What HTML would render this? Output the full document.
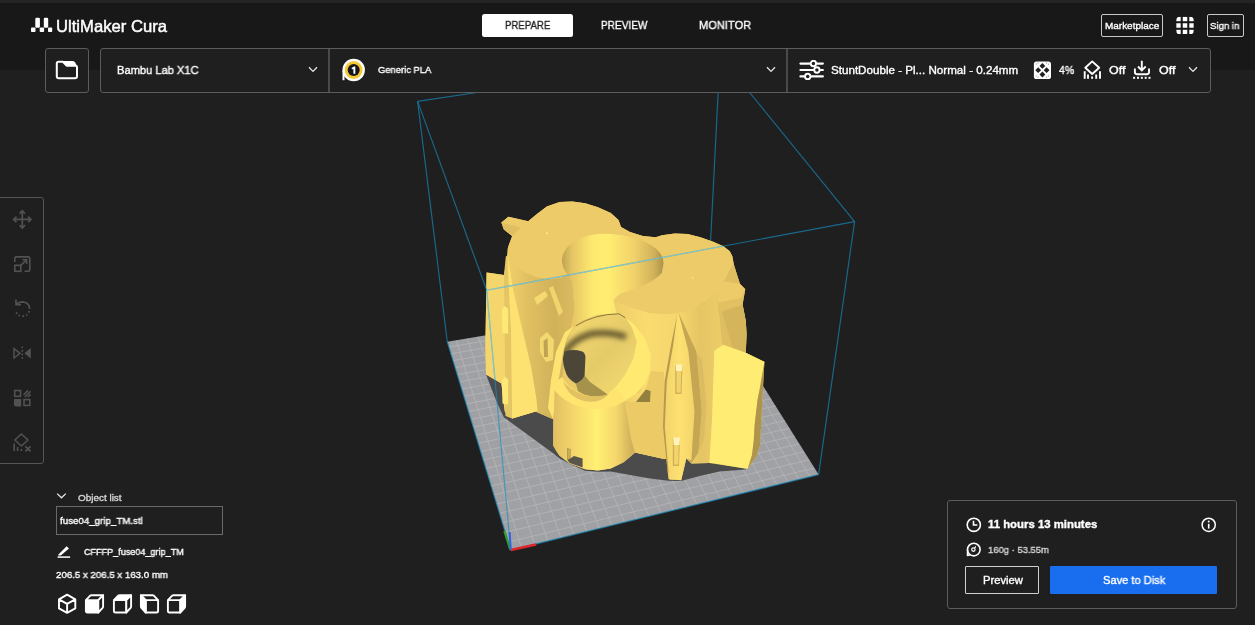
<!DOCTYPE html>
<html>
<head>
<meta charset="utf-8">
<title>UltiMaker Cura</title>
<style>
*{box-sizing:border-box;margin:0;padding:0}
html,body{width:1255px;height:625px;overflow:hidden;background:#1f1f1f;font-family:"Liberation Sans",sans-serif;color:#fff}
#app{position:relative;width:1255px;height:625px;overflow:hidden;background:#1f1f1f}
#hdr{position:absolute;left:0;top:0;width:1255px;height:70px;background:#181818}
#hdr:before{content:"";position:absolute;left:0;top:0;width:100%;height:3px;background:#242424}
#scene{position:absolute;left:0;top:0;width:1255px;height:625px}
.t{position:absolute;white-space:nowrap;line-height:1;color:#fff;-webkit-text-stroke:0.35px currentColor;will-change:transform}
.box{position:absolute;border:1px solid #5c5c5c;border-radius:3px;background:#1f1f1f}
.ico{position:absolute}
</style>
</head>
<body>
<div id="app">
<div id="hdr"></div>

<!-- 3D SCENE -->
<svg id="scene" width="1255" height="625" viewBox="0 0 1255 625">
<defs>
<clipPath id="plateclip"><polygon points="447.3,341.8 510.7,550.1 818.6,474.6 707.7,297.5"/></clipPath>
</defs>
<line x1="417.6" y1="101.4" x2="720.0" y2="56.0" stroke="#168dc2" stroke-width="1.15" stroke-opacity="0.67"/>
<line x1="720.0" y1="56.0" x2="854.6" y2="221.6" stroke="#168dc2" stroke-width="1.15" stroke-opacity="0.67"/>
<line x1="720.0" y1="56.0" x2="707.7" y2="297.5" stroke="#168dc2" stroke-width="1.15" stroke-opacity="0.67"/>
<line x1="417.6" y1="101.4" x2="447.3" y2="341.8" stroke="#168dc2" stroke-width="1.15" stroke-opacity="0.67"/>
<line x1="854.6" y1="221.6" x2="818.6" y2="474.6" stroke="#168dc2" stroke-width="1.15" stroke-opacity="0.67"/>
<polygon points="447.3,341.8 510.7,550.1 818.6,474.6 707.7,297.5" fill="#a0a1a5"/>
<g clip-path="url(#plateclip)" stroke="#b4b4b4" stroke-width="0.9" fill="none">
<line x1="521.4" y1="547.5" x2="456.2" y2="340.3"/>
<line x1="508.3" y1="542.1" x2="814.4" y2="468.0"/>
<line x1="534.7" y1="544.2" x2="467.2" y2="338.4"/>
<line x1="505.3" y1="532.3" x2="809.3" y2="459.8"/>
<line x1="547.9" y1="541.0" x2="478.2" y2="336.5"/>
<line x1="502.4" y1="522.7" x2="804.3" y2="451.7"/>
<line x1="560.9" y1="537.8" x2="489.1" y2="334.7"/>
<line x1="499.5" y1="513.3" x2="799.3" y2="443.8"/>
<line x1="573.8" y1="534.6" x2="499.9" y2="332.9"/>
<line x1="496.7" y1="504.0" x2="794.4" y2="436.0"/>
<line x1="586.7" y1="531.5" x2="510.6" y2="331.0"/>
<line x1="493.9" y1="494.8" x2="789.6" y2="428.3"/>
<line x1="599.4" y1="528.4" x2="521.2" y2="329.2"/>
<line x1="491.1" y1="485.9" x2="784.9" y2="420.7"/>
<line x1="611.9" y1="525.3" x2="531.8" y2="327.4"/>
<line x1="488.5" y1="477.0" x2="780.2" y2="413.3"/>
<line x1="624.4" y1="522.2" x2="542.3" y2="325.6"/>
<line x1="485.8" y1="468.4" x2="775.6" y2="406.0"/>
<line x1="636.8" y1="519.2" x2="552.7" y2="323.9"/>
<line x1="483.2" y1="459.8" x2="771.1" y2="398.7"/>
<line x1="649.0" y1="516.2" x2="563.0" y2="322.1"/>
<line x1="480.7" y1="451.5" x2="766.6" y2="391.6"/>
<line x1="661.2" y1="513.2" x2="573.3" y2="320.4"/>
<line x1="478.2" y1="443.2" x2="762.2" y2="384.6"/>
<line x1="673.2" y1="510.2" x2="583.4" y2="318.6"/>
<line x1="475.7" y1="435.1" x2="757.9" y2="377.7"/>
<line x1="685.2" y1="507.3" x2="593.6" y2="316.9"/>
<line x1="473.3" y1="427.1" x2="753.7" y2="370.9"/>
<line x1="697.0" y1="504.4" x2="603.6" y2="315.2"/>
<line x1="470.9" y1="419.3" x2="749.5" y2="364.2"/>
<line x1="708.7" y1="501.5" x2="613.6" y2="313.5"/>
<line x1="468.5" y1="411.5" x2="745.3" y2="357.6"/>
<line x1="720.4" y1="498.7" x2="623.5" y2="311.8"/>
<line x1="466.2" y1="403.9" x2="741.2" y2="351.1"/>
<line x1="731.9" y1="495.9" x2="633.3" y2="310.2"/>
<line x1="463.9" y1="396.4" x2="737.2" y2="344.6"/>
<line x1="743.3" y1="493.1" x2="643.1" y2="308.5"/>
<line x1="461.7" y1="389.1" x2="733.3" y2="338.3"/>
<line x1="754.7" y1="490.3" x2="652.8" y2="306.8"/>
<line x1="459.5" y1="381.8" x2="729.3" y2="332.1"/>
<line x1="765.9" y1="487.5" x2="662.4" y2="305.2"/>
<line x1="457.3" y1="374.6" x2="725.5" y2="325.9"/>
<line x1="777.1" y1="484.8" x2="672.0" y2="303.6"/>
<line x1="455.2" y1="367.6" x2="721.7" y2="319.8"/>
<line x1="788.1" y1="482.1" x2="681.5" y2="302.0"/>
<line x1="453.0" y1="360.7" x2="717.9" y2="313.8"/>
<line x1="799.1" y1="479.4" x2="690.9" y2="300.4"/>
<line x1="451.0" y1="353.8" x2="714.2" y2="307.9"/>
<line x1="810.0" y1="476.7" x2="700.3" y2="298.8"/>
<line x1="448.9" y1="347.1" x2="710.6" y2="302.1"/>
</g>
<polyline points="447.3,341.8 510.7,550.1 818.6,474.6" fill="none" stroke="#168dc2" stroke-opacity="0.67" stroke-width="1.3"/>
<defs>
<linearGradient id="gBowl" gradientUnits="userSpaceOnUse" x1="562" y1="0" x2="664" y2="0">
 <stop offset="0" stop-color="#bfa353"/><stop offset="0.1" stop-color="#e5c564"/><stop offset="0.3" stop-color="#ffe970"/><stop offset="0.45" stop-color="#ffed71"/><stop offset="0.7" stop-color="#f2d26a"/><stop offset="0.9" stop-color="#d1b25a"/><stop offset="1" stop-color="#aa924b"/>
</linearGradient>
<linearGradient id="gCyl" gradientUnits="userSpaceOnUse" x1="554" y1="0" x2="632" y2="0">
 <stop offset="0" stop-color="#e2c062"/><stop offset="0.25" stop-color="#f5d66b"/><stop offset="0.55" stop-color="#fff072"/><stop offset="0.8" stop-color="#f5d66c"/><stop offset="1" stop-color="#cfb15a"/>
</linearGradient>
<linearGradient id="gLobeL" gradientUnits="userSpaceOnUse" x1="507" y1="0" x2="575" y2="0">
 <stop offset="0" stop-color="#f0d069"/><stop offset="0.3" stop-color="#e1c062"/><stop offset="0.7" stop-color="#d1b25a"/><stop offset="1" stop-color="#dcbb60"/>
</linearGradient>
<linearGradient id="gLobeR" gradientUnits="userSpaceOnUse" x1="614" y1="0" x2="722" y2="0">
 <stop offset="0" stop-color="#edce68"/><stop offset="0.3" stop-color="#fadb70"/><stop offset="0.6" stop-color="#f5d66d"/><stop offset="0.8" stop-color="#e5c564"/><stop offset="1" stop-color="#edcd67"/>
</linearGradient>
<linearGradient id="gCup" gradientUnits="userSpaceOnUse" x1="596" y1="316" x2="606" y2="398">
 <stop offset="0" stop-color="#f9dc71"/><stop offset="0.14" stop-color="#e5c868"/><stop offset="0.24" stop-color="#85763c"/><stop offset="0.36" stop-color="#ccb25e"/><stop offset="0.6" stop-color="#e5ca69"/><stop offset="1" stop-color="#f2d76f"/>
</linearGradient>
<linearGradient id="gCup2" gradientUnits="userSpaceOnUse" x1="575" y1="330" x2="630" y2="385">
 <stop offset="0" stop-color="#efd46e"/><stop offset="0.5" stop-color="#e5ca69"/><stop offset="1" stop-color="#f3d970"/>
</linearGradient>
<linearGradient id="gFin" gradientUnits="userSpaceOnUse" x1="664" y1="0" x2="696" y2="0">
 <stop offset="0" stop-color="#f2d36b"/><stop offset="0.5" stop-color="#fde071"/><stop offset="1" stop-color="#f1d26a"/>
</linearGradient>
</defs>
<polygon points="486.0,374.4 492.0,390.0 498.0,405.0 503.8,417.3 514.4,425.0 528.8,435.5 543.2,446.0 553.8,453.8 559.6,458.6 572.4,465.0 585.0,470.7 598.0,471.8 610.8,471.4 630.0,475.0 650.0,478.5 668.4,480.8 681.2,481.0 700.0,476.0 719.6,471.5 745.2,469.4 750.0,465.0 740.0,440.0 560.0,400.0" fill="#4b4b4c" />
<polygon points="501.4,222.5 508.4,216.8 528.2,221.2 536.6,214.2 546.8,206.5 559.6,202.0 572.4,201.4 585.2,203.3 598.0,207.2 610.8,212.9 618.5,220.0 621.0,227.0 630.0,232.0 642.8,236.0 655.6,237.2 662.0,235.3 674.8,233.4 687.6,234.0 700.4,237.2 713.2,241.7 723.4,246.2 729.8,251.3 732.4,256.4 733.7,264.1 736.5,273.0 740.0,284.0 745.2,289.2 742.6,304.6 745.8,321.2 746.5,334.0 745.8,352.7 764.4,361.6 762.5,396.2 761.4,420.0 760.0,445.6 756.7,455.8 747.8,468.6 745.2,468.6 709.4,462.9 691.4,463.5 686.3,458.4 681.2,480.2 669.7,479.5 668.4,478.9 666.5,459.0 662.0,458.4 635.1,452.6 630.0,457.1 623.6,462.2 610.8,468.6 598.0,470.6 585.2,469.3 569.8,463.5 559.6,455.8 553.2,445.6 553.2,419.2 535.3,411.6 512.2,418.6 504.6,411.6 501.4,383.4 486.0,374.4 485.4,345.0 486.6,272.6 504.0,275.0 505.8,256.4 507.8,255.2 508.4,246.2 512.2,236.0 503.9,229.6" fill="#ebc966" />
<clipPath id="silclip"><polygon points="501.4,222.5 508.4,216.8 528.2,221.2 536.6,214.2 546.8,206.5 559.6,202.0 572.4,201.4 585.2,203.3 598.0,207.2 610.8,212.9 618.5,220.0 621.0,227.0 630.0,232.0 642.8,236.0 655.6,237.2 662.0,235.3 674.8,233.4 687.6,234.0 700.4,237.2 713.2,241.7 723.4,246.2 729.8,251.3 732.4,256.4 733.7,264.1 736.5,273.0 740.0,284.0 745.2,289.2 742.6,304.6 745.8,321.2 746.5,334.0 745.8,352.7 764.4,361.6 762.5,396.2 761.4,420.0 760.0,445.6 756.7,455.8 747.8,468.6 745.2,468.6 709.4,462.9 691.4,463.5 686.3,458.4 681.2,480.2 669.7,479.5 668.4,478.9 666.5,459.0 662.0,458.4 635.1,452.6 630.0,457.1 623.6,462.2 610.8,468.6 598.0,470.6 585.2,469.3 569.8,463.5 559.6,455.8 553.2,445.6 553.2,419.2 535.3,411.6 512.2,418.6 504.6,411.6 501.4,383.4 486.0,374.4 485.4,345.0 486.6,272.6 504.0,275.0 505.8,256.4 507.8,255.2 508.4,246.2 512.2,236.0 503.9,229.6"/></clipPath>
<polygon points="733.7,264.1 736.5,273.0 740.0,284.0 745.2,289.2 742.6,304.6 745.8,321.2 746.5,334.0 745.8,352.7 722.0,345.0 717.0,292.0 724.0,281.0 729.8,270.0" fill="#dfbe61" />
<polygon points="722.0,312.0 742.6,305.0 745.8,321.2 746.5,334.0 745.8,352.7 733.0,349.0" fill="#d5b55b" />
<polygon points="507.5,249.2 512.0,262.0 522.2,271.0 537.6,277.4 551.7,279.3 561.9,277.4 567.0,274.2 572.2,281.2 574.7,310.0 570.0,332.0 565.6,351.0 560.0,400.0 553.2,419.2 535.3,411.6 512.2,418.6 505.0,411.0 504.5,300.0" fill="url(#gLobeL)" />
<polygon points="534.0,298.0 545.0,291.0 548.0,296.0 537.0,305.0" fill="#f5d86f" />
<polygon points="549.0,288.0 553.0,286.0 563.0,312.0 559.0,316.0" fill="#f2d46d" />
<polygon points="540.0,338.0 547.0,332.0 554.0,340.0 553.0,360.0 546.0,362.0 540.0,352.0" fill="#f3d870" />
<polygon points="543.5,341.0 547.5,338.0 548.0,357.0 544.0,357.0" fill="#c0a352" />
<polygon points="553.0,419.2 556.0,396.0 560.0,372.0 563.0,352.0 567.0,338.0 574.0,326.0 565.0,332.0 556.0,352.0 551.0,380.0 548.0,408.0" fill="#fde371" />
<polygon points="613.6,300.3 630.0,307.0 649.5,313.0 668.0,314.0 685.0,311.6 701.7,303.3 717.0,292.0 722.0,345.0 714.5,352.7 712.0,420.0 709.4,462.9 691.4,463.5 686.3,458.4 666.5,459.0 662.0,458.4 635.1,452.6 631.4,440.0 624.7,401.0 640.0,392.0 650.0,372.0 651.0,355.0 645.0,338.0 634.0,324.0 625.4,317.8 616.0,313.0" fill="url(#gLobeR)" />
<polygon points="624.7,401.0 635.2,402.0 645.8,389.6 651.0,371.0 664.0,372.0 664.0,420.0 666.5,459.0 662.0,458.4 635.1,452.6 631.4,440.0" fill="#eccb67" />
<polygon points="636.0,402.0 645.8,389.6 650.6,391.0 650.0,402.0" fill="#93803f" />
<path d="M561.8,261 C561.5,246 580,233.6 604,233.6 C634,233.6 664.5,246 663.7,263.4 L662,273 Q655,280 646,284 L634,289.5 L620,294 L613.6,300.3 L616.8,313.4 L597.6,314.7 L582.2,320.5 L576,324 L574.7,310 L572.2,281.2 L567,274.2 Q562.5,268 561.8,261Z" fill="url(#gBowl)" />
<polygon points="512.2,236.0 503.9,229.6 501.4,222.5 508.4,216.8 528.2,221.2 536.6,214.2 546.8,206.5 559.6,202.0 572.4,201.4 585.2,203.3 598.0,207.2 610.8,212.9 618.5,220.0 621.0,227.0 630.0,232.0 642.8,236.0 655.6,237.2 662.0,235.3 674.8,233.4 687.6,234.0 700.4,237.2 713.2,241.7 723.4,246.2 729.8,251.3 732.4,256.4 733.7,264.1 729.8,270.0 724.0,281.0 740.0,284.0 745.2,289.2 741.4,298.0 718.3,303.0 717.0,292.0 701.7,303.3 685.0,311.6 668.0,314.0 649.5,313.0 630.0,307.0 613.6,300.3 620.0,294.0 634.0,289.5 646.0,284.0 655.0,280.0 662.0,273.0 663.7,263.4 663.0,258.3 660.7,253.6 656.8,249.3 651.7,245.4 645.4,242.0 638.2,239.1 630.3,236.7 621.8,235.0 613.0,234.0 604.0,233.6 597.0,234.0 590.4,235.0 584.2,236.7 578.7,238.9 573.8,241.7 569.6,244.9 566.2,248.5 563.8,252.4 562.3,256.6 561.8,261.0 562.5,268.0 567.0,274.2 561.9,277.4 551.7,279.3 537.6,277.4 522.2,271.0 512.0,262.0 507.5,249.2 508.4,246.2" fill="#edcb68" />
<polygon points="501.4,222.5 521.0,227.5 512.2,236.0 503.9,229.6" fill="#dfbf61" />
<polygon points="717.0,292.0 718.3,311.0 741.4,304.6 745.2,289.2 741.4,298.0 718.3,303.0" fill="#e2c163" />
<polygon points="486.6,272.6 504.0,275.0 505.0,300.0 505.6,416.0 501.4,383.4 486.0,374.4 485.4,345.0" fill="#f5d66c" />
<polygon points="504.0,275.0 507.5,255.6 509.0,290.0 511.0,330.0 512.2,418.6 505.6,416.0" fill="#e5c664" />
<polygon points="507.5,255.6 513.3,290.6 522.2,329.0 531.2,367.4 536.3,398.0 537.6,411.0 512.2,418.6 511.0,330.0 509.0,290.0" fill="#fee271" />
<polygon points="501.8,310.0 505.0,306.0 508.2,309.0 508.2,334.0 502.5,333.0" fill="#ffe976" />
<polygon points="501.8,380.5 505.0,376.4 508.2,379.5 508.2,404.5 502.5,403.5" fill="#ffe976" />
<polygon points="625.4,317.8 634.0,324.0 645.0,338.0 651.0,355.0 650.0,372.0 645.0,384.0 636.0,394.0 624.7,401.0 612.0,398.0 600.0,398.0 616.0,386.6 625.4,373.8 633.4,357.8 636.6,341.8 632.0,328.0" fill="#ffe971" />
<clipPath id="cupclip"><polygon points="566.2,341.8 575.8,325.8 595.0,316.2 619.0,313.8 625.4,317.8 632.0,328.0 636.6,341.8 633.4,357.8 625.4,373.8 615.8,386.6 607.8,394.6 599.8,397.8 588.0,397.0 576.0,390.0 567.0,376.0 563.5,360.0 564.0,350.0"/></clipPath>
<filter id="blur3" x="-20%" y="-50%" width="140%" height="200%"><feGaussianBlur stdDeviation="2.6"/></filter>
<polygon points="566.2,341.8 575.8,325.8 595.0,316.2 619.0,313.8 625.4,317.8 632.0,328.0 636.6,341.8 633.4,357.8 625.4,373.8 615.8,386.6 607.8,394.6 599.8,397.8 588.0,397.0 576.0,390.0 567.0,376.0 563.5,360.0 564.0,350.0" fill="url(#gCup2)" />
<g clip-path="url(#cupclip)"><path d="M562,357 Q572,338 593,333.5 Q610,331.5 626,337" fill="none" stroke="#6a5d31" stroke-width="6.5" filter="url(#blur3)"/></g>
<path d="M575.8,325.8 Q595,314 619,313.8 L625.4,317.8" fill="none" stroke="#7d6e38" stroke-width="0.9"/>
<polygon points="575.8,383.4 584.6,375.4 590.0,382.0 607.8,394.6 599.8,397.8 588.0,397.0 578.0,391.0" fill="#a6934b" />
<path d="M564.6,351.4 Q573,348.6 582.2,351.4 Q585.6,353 585.4,357.8 L584.6,375.4 Q582,381 575.8,383.4 Q569,380 566.2,373.8 Q562.6,364 563,357.8 Z" fill="#4b4638" />
<path d="M554.5,390 L553.2,445.6 Q556,452 559.6,455.8 L569.8,463.5 L585.2,469.3 L598,470.6 L610.8,468.6 L623.6,462.2 L630,457.1 L635.1,452.6 L631.4,440 L624.7,401 Q610,410 590,408 Q566,404 554.5,390Z" fill="url(#gCyl)" />
<path d="M554.5,390 Q555,382 562,377 Q566,385 576,391 Q590,399 607,396 L616,388 Q622,393 624.7,401 Q610,411 590,409 Q566,405 554.5,390Z" fill="#ffe56f" />
<path d="M563,381 Q570,390 584,395 Q598,398 609,394 Q600,404 584,401 Q568,397 563,381Z" fill="#e2c163" />
<polygon points="567.3,448.2 571.0,449.5 571.0,458.0 574.0,456.0 582.6,458.5 582.6,467.5 569.8,463.0 567.3,460.0" fill="#59554a" />
<polygon points="567.3,448.2 571.0,449.5 571.0,458.0 567.3,460.0" fill="#caac57" />
<polygon points="677.8,312.8 672.0,345.0 665.6,381.2 664.0,426.8 668.6,472.4 669.7,479.5 676.2,479.8 681.2,480.2 686.3,458.4 691.4,460.3 694.5,411.6 688.4,350.8" fill="url(#gFin)" />
<polygon points="677.3,314.0 671.0,345.0 664.6,381.2 663.0,426.8 667.6,472.4 668.6,472.4 664.8,426.8 666.8,381.2 673.2,345.0" fill="#b79a4f" />
<polygon points="678.6,312.8 688.4,350.8 694.5,411.6 691.4,460.3 686.3,458.4 691.4,463.5 698.5,452.0 701.8,411.0 696.5,352.0" fill="#c5a653" />
<polygon points="696.5,352.0 701.8,411.0 698.5,452.0 704.0,440.0 706.5,405.0 702.0,360.0" fill="#dbbc60" />
<polygon points="675.2,365.0 682.5,365.0 681.5,394.0 675.2,394.0" fill="#d2b056" />
<polygon points="676.6,371.0 681.2,371.0 680.6,392.5 676.6,392.5" fill="#f2d46c" />
<polygon points="675.6,364.5 682.5,364.5 682.0,371.0 676.0,371.0" fill="#fff3b8" />
<polygon points="672.8,438.0 680.0,438.0 679.0,466.0 672.8,466.0" fill="#d2b056" />
<polygon points="674.2,445.0 678.8,445.0 678.2,464.5 674.2,464.5" fill="#f2d46c" />
<polygon points="673.2,437.5 680.0,437.5 679.6,445.0 673.6,445.0" fill="#fff3b8" />
<polygon points="714.3,350.8 723.4,344.7 745.8,352.7 764.4,362.0 759.5,390.0 757.5,400.0 754.6,425.0 753.8,440.0 752.0,455.0 747.8,468.6 745.2,468.6 714.3,463.3 709.4,462.9 712.0,420.0" fill="#ffec73" />
<polygon points="764.4,362.0 762.5,396.2 761.4,420.0 760.0,445.6 756.7,455.8 747.8,468.6 752.0,455.0 753.8,440.0 754.6,425.0 757.5,400.0 759.5,390.0" fill="#af944b" />
<polygon points="545.6,232.6 548.4,232.8 547.0,234.6" fill="#fff0a8" />
<polygon points="691.5,277.5 693.5,277.8 692.5,279.3" fill="#fff0a8" />
<line x1="417.6" y1="101.4" x2="486.7" y2="290.3" stroke="#168dc2" stroke-width="1.15" stroke-opacity="0.67"/>
<line x1="486.7" y1="290.3" x2="854.6" y2="221.6" stroke="#168dc2" stroke-width="1.15" stroke-opacity="0.67"/>
<line x1="486.7" y1="290.3" x2="510.7" y2="550.1" stroke="#168dc2" stroke-width="1.15" stroke-opacity="0.67"/>
<g clip-path="url(#silclip)" stroke="#9fdde0" stroke-width="1.2" stroke-opacity="0.55"><line x1="486.7" y1="290.3" x2="854.6" y2="221.6"/><line x1="486.7" y1="290.3" x2="510.7" y2="550.1"/></g>
<line x1="510.7" y1="550.1" x2="536.0" y2="544.4" stroke="#e0262b" stroke-width="2.6" />
<line x1="504.3" y1="531.0" x2="510.2" y2="549.5" stroke="#2aa02a" stroke-width="2.2" />
<line x1="509.6" y1="532.0" x2="510.7" y2="549.5" stroke="#2f62e6" stroke-width="2.0" />
</svg>

<!-- HEADER -->
<svg class="ico" style="left:31px;top:17px" width="22" height="16" viewBox="0 0 22 16"><g fill="#fff"><rect x="0" y="10.6" width="4.5" height="4.4" rx="0.8"/><rect x="4.3" y="0.8" width="4.6" height="10" rx="1.2"/><rect x="8.7" y="10.6" width="4.4" height="4.4" rx="0.8"/><rect x="12.8" y="0.8" width="4.4" height="10" rx="1.2"/><rect x="17" y="10.6" width="4.2" height="4.4" rx="0.8"/></g></svg>
<span class="t" id="t1" style="left:55.6px;top:17.73px;font-size:16.5px;font-weight:normal;color:#fff;transform:scaleX(1.0088);transform-origin:0 0;-webkit-text-stroke:0.45px #fff">UltiMaker Cura</span>

<div style="position:absolute;left:481.6px;top:14px;width:91.4px;height:22.8px;background:#fff;border-radius:2.5px"></div>
<span class="t" id="t2" style="left:504.7px;top:19.75px;font-size:11.4px;font-weight:normal;color:#1f1f1f;transform:scaleX(0.8452);transform-origin:0 0">PREPARE</span>
<span class="t" id="t3" style="left:601.4px;top:19.75px;font-size:11.4px;font-weight:normal;color:#fff;transform:scaleX(0.8849);transform-origin:0 0">PREVIEW</span>
<span class="t" id="t4" style="left:698.8px;top:19.75px;font-size:11.4px;font-weight:normal;color:#fff;transform:scaleX(0.9743);transform-origin:0 0">MONITOR</span>

<div class="box" style="left:1101px;top:14px;width:62px;height:23px;border-color:#c8c8c8;background:transparent;border-radius:2px"></div>
<span class="t" id="t5" style="left:1105px;top:20.70px;font-size:9.8px;font-weight:normal;color:#fff;transform:scaleX(1.0155);transform-origin:0 0">Marketplace</span>
<svg class="ico" style="left:1176px;top:16px" width="18" height="18" viewBox="0 0 18 18"><defs><clipPath id="gc"><rect x="0.2" y="0.7" width="17.6" height="17.6" rx="3.6"/></clipPath></defs><g clip-path="url(#gc)"><rect x="0.20" y="0.70" width="4.5" height="4.5" fill="#fff"/><rect x="6.75" y="0.70" width="4.5" height="4.5" fill="#fff"/><rect x="13.30" y="0.70" width="4.5" height="4.5" fill="#fff"/><rect x="0.20" y="7.25" width="4.5" height="4.5" fill="#fff"/><rect x="6.75" y="7.25" width="4.5" height="4.5" fill="#fff"/><rect x="13.30" y="7.25" width="4.5" height="4.5" fill="#fff"/><rect x="0.20" y="13.80" width="4.5" height="4.5" fill="#fff"/><rect x="6.75" y="13.80" width="4.5" height="4.5" fill="#fff"/><rect x="13.30" y="13.80" width="4.5" height="4.5" fill="#fff"/></g></svg>
<div class="box" style="left:1207px;top:14px;width:37px;height:23px;border-color:#c8c8c8;background:transparent;border-radius:2px"></div>
<span class="t" id="t6" style="left:1210.4px;top:20.70px;font-size:9.8px;font-weight:normal;color:#fff;transform:scaleX(0.9810);transform-origin:0 0">Sign in</span>

<!-- STAGE MENU -->
<div class="box" style="left:44.6px;top:48px;width:44.6px;height:44.5px"></div>
<svg class="ico" style="left:55px;top:59px" width="24" height="22" viewBox="0 0 24 22"><path d="M3.6 2.8 H7.8 L11.6 6.6 H20 Q22 6.6 22 8.6 V17.2 Q22 19.2 20 19.2 H3.8 Q1.8 19.2 1.8 17.2 V4.6 Q1.8 2.8 3.6 2.8Z" fill="none" stroke="#fff" stroke-width="2" stroke-linejoin="round"/><path d="M7.6 2 H17.8 Q19.4 2 20.2 3.6 L22 7.4 H11.4Z" fill="#fff"/></svg>

<div class="box" style="left:100px;top:48px;width:1110.6px;height:44.5px"></div>
<div style="position:absolute;left:328px;top:49px;width:2px;height:43px;background:#4a4a4a"></div>
<div style="position:absolute;left:786px;top:49px;width:2px;height:43px;background:#4a4a4a"></div>
<span class="t" id="t7" style="left:117.1px;top:65.02px;font-size:11.2px;font-weight:normal;color:#fff;transform:scaleX(0.9940);transform-origin:0 0">Bambu Lab X1C</span>
<svg class="ico" style="left:308px;top:66px" width="10" height="7" viewBox="0 0 10 7"><path d="M1 1.2 L5 5.4 L9 1.2" fill="none" stroke="#e6e6e6" stroke-width="1.3"/></svg>
<svg class="ico" style="left:340px;top:57px" width="26" height="26" viewBox="0 0 26 26"><circle cx="13.7" cy="13" r="11.2" fill="#fff"/><path d="M3.5 13 V23.2" stroke="#fff" stroke-width="2" fill="none"/><circle cx="13.7" cy="13" r="8.9" fill="#f3c832"/><circle cx="13.7" cy="13" r="6" fill="#15151f"/><path d="M11.5 11.1 L14 9.4 H15.3 V16.7 H13.4 V11.8 L12.2 12.6Z" fill="#fff"/></svg>
<span class="t" id="t8" style="left:378.4px;top:65.40px;font-size:9.8px;font-weight:normal;color:#fff;transform:scaleX(0.9595);transform-origin:0 0">Generic PLA</span>
<svg class="ico" style="left:766px;top:66px" width="10" height="7" viewBox="0 0 10 7"><path d="M1 1.2 L5 5.4 L9 1.2" fill="none" stroke="#e6e6e6" stroke-width="1.3"/></svg>

<svg class="ico" style="left:799px;top:60px" width="25" height="21" viewBox="0 0 25 21"><path d="M1.4 3.6 H10.600000000000001 M18.2 3.6 H23.9" stroke="#fff" stroke-width="2.1" stroke-linecap="round" fill="none"/><circle cx="14.4" cy="3.6" r="2.7" fill="none" stroke="#fff" stroke-width="1.9"/><path d="M1.4 10 H14.099999999999998 M21.7 10 H23.9" stroke="#fff" stroke-width="2.1" stroke-linecap="round" fill="none"/><circle cx="17.9" cy="10" r="2.7" fill="none" stroke="#fff" stroke-width="1.9"/><path d="M1.4 16.4 H4.8999999999999995 M12.5 16.4 H23.9" stroke="#fff" stroke-width="2.1" stroke-linecap="round" fill="none"/><circle cx="8.7" cy="16.4" r="2.7" fill="none" stroke="#fff" stroke-width="1.9"/></svg>
<span class="t" id="t9" style="left:830.8px;top:65.12px;font-size:11.2px;font-weight:normal;color:#fff;transform:scaleX(1.0382);transform-origin:0 0">StuntDouble - Pl... Normal - 0.24mm</span>
<svg class="ico" style="left:1033px;top:60px" width="19" height="20" viewBox="0 0 19 20"><rect x="0.9" y="1.4" width="17.1" height="17.7" rx="2.6" fill="#fff"/><path d="M9.4 3.0000000000000004 L12.3 5.9 L9.4 8.8 L6.5 5.9Z" fill="#1f1f1f"/><path d="M5.2 7.299999999999999 L8.1 10.2 L5.2 13.1 L2.3000000000000003 10.2Z" fill="#1f1f1f"/><path d="M13.6 7.299999999999999 L16.5 10.2 L13.6 13.1 L10.7 10.2Z" fill="#1f1f1f"/><path d="M9.4 11.6 L12.3 14.5 L9.4 17.4 L6.5 14.5Z" fill="#1f1f1f"/><rect x="2.7" y="3.5" width="1" height="1" fill="#8a8a8a"/><rect x="4.5" y="2.5" width="1" height="1" fill="#8a8a8a"/><rect x="13.1" y="2.5" width="1" height="1" fill="#8a8a8a"/><rect x="14.9" y="3.7" width="1" height="1" fill="#8a8a8a"/><rect x="2.7" y="15.5" width="1" height="1" fill="#8a8a8a"/><rect x="4.5" y="16.7" width="1" height="1" fill="#8a8a8a"/><rect x="13.1" y="16.7" width="1" height="1" fill="#8a8a8a"/><rect x="14.9" y="15.5" width="1" height="1" fill="#8a8a8a"/></svg>
<span class="t" id="t10" style="left:1059px;top:65.12px;font-size:11.2px;font-weight:normal;color:#fff;transform:scaleX(0.9399);transform-origin:0 0">4%</span>
<svg class="ico" style="left:1082px;top:59px" width="21" height="21" viewBox="0 0 21 21"><path d="M10.2 2.4 L17.2 8.7 L10.2 15 L3.3 8.7Z" fill="none" stroke="#fff" stroke-width="1.9" stroke-linejoin="round"/><path d="M2.7 12.2 V19.8" stroke="#fff" stroke-width="1.9" fill="none"/><path d="M6 15.5 V19.8" stroke="#fff" stroke-width="1.9" fill="none"/><path d="M10.1 17.5 V19.8" stroke="#fff" stroke-width="1.9" fill="none"/><path d="M14.2 15.5 V19.8" stroke="#fff" stroke-width="1.9" fill="none"/><path d="M18 12.2 V19.8" stroke="#fff" stroke-width="1.9" fill="none"/></svg>
<span class="t" id="t11" style="left:1108.8px;top:65.12px;font-size:11.2px;font-weight:normal;color:#fff;transform:scaleX(1.1142);transform-origin:0 0">Off</span>
<svg class="ico" style="left:1132px;top:59px" width="21" height="21" viewBox="0 0 21 21"><path d="M9.8 1.7 V11 M6 7.5 L9.8 11.4 L13.7 7.5" fill="none" stroke="#fff" stroke-width="1.9"/><path d="M2.9 9.6 V13 Q2.9 15.2 5.1 15.2 H14.8 Q17 15.2 17 13 V9.6" fill="none" stroke="#fff" stroke-width="1.9"/><rect x="1.1" y="17.8" width="2" height="2" fill="#fff"/><rect x="5" y="17.8" width="2" height="2" fill="#fff"/><rect x="8.8" y="17.8" width="2" height="2" fill="#fff"/><rect x="12.7" y="17.8" width="2" height="2" fill="#fff"/><rect x="16.5" y="17.8" width="2" height="2" fill="#fff"/></svg>
<span class="t" id="t12" style="left:1158.6px;top:65.12px;font-size:11.2px;font-weight:normal;color:#fff;transform:scaleX(1.1142);transform-origin:0 0">Off</span>
<svg class="ico" style="left:1188px;top:66px" width="10" height="7" viewBox="0 0 10 7"><path d="M1 1.2 L5 5.4 L9 1.2" fill="none" stroke="#e6e6e6" stroke-width="1.3"/></svg>

<!-- TOOLBAR -->
<div class="box" style="left:-4px;top:197px;width:48px;height:267px;border-color:#555"></div>
<svg class="ico" style="left:12px;top:209px" width="21" height="21" viewBox="0 0 21 21"><path d="M10.3 2.4 V18.4 M2.3 10.4 H18.3" stroke="#525252" stroke-width="1.7" fill="none"/><path d="M7.6 4.6 L10.3 1.8 L13 4.6 M7.6 16.2 L10.3 19 L13 16.2 M4.5 7.7 L1.7 10.4 L4.5 13.1 M16.1 7.7 L18.9 10.4 L16.1 13.1" stroke="#525252" stroke-width="1.7" fill="none"/></svg>
<svg class="ico" style="left:13px;top:255px" width="19" height="19" viewBox="0 0 19 19"><path d="M1.8 7 V3.4 Q1.8 1.9 3.3 1.9 H15.3 Q16.8 1.9 16.8 3.4 V14.8 Q16.8 16.3 15.3 16.3 H11.6" fill="none" stroke="#525252" stroke-width="1.6"/><rect x="1.8" y="10.3" width="6" height="6" fill="none" stroke="#525252" stroke-width="1.6"/><path d="M7.8 10.3 L13.4 5 M9.4 4.8 H13.6 V9" fill="none" stroke="#525252" stroke-width="1.6"/></svg>
<svg class="ico" style="left:12px;top:298px" width="21" height="21" viewBox="0 0 21 21"><path d="M4.2 6.2 Q7 3.8 10.4 3.8 Q17.4 4.2 17.6 11" fill="none" stroke="#525252" stroke-width="1.7"/><path d="M4 1.6 V6.6 H9" fill="none" stroke="#525252" stroke-width="1.7"/><path d="M17.2 13 Q15.6 18.2 10.4 18.2 Q5 18 3.4 12.4" fill="none" stroke="#525252" stroke-width="1.7" stroke-dasharray="1.6 2.2"/></svg>
<svg class="ico" style="left:12px;top:346px" width="21" height="15" viewBox="0 0 21 15"><path d="M2 2.6 L8 7.3 L2 12 Z" fill="none" stroke="#525252" stroke-width="1.5"/><path d="M18.8 2 L12.4 7.3 L18.8 12.6Z" fill="#525252"/><path d="M10.3 0.6 V14.4" stroke="#525252" stroke-width="1.5" stroke-dasharray="1.6 1.9"/></svg>
<svg class="ico" style="left:13px;top:389px" width="19" height="18" viewBox="0 0 19 18"><rect x="1.7" y="1.5" width="5.8" height="5.8" fill="none" stroke="#525252" stroke-width="1.6"/><path d="M10.6 6 L15 1.4 M12 8 L17.6 2.2 M15 8 L17.6 5.4" stroke="#525252" stroke-width="1.6" fill="none"/><path d="M1 10 H8.2 V17.4 H3 Q1 17.4 1 15.4Z" fill="#525252"/><rect x="11" y="10.6" width="5.8" height="5.8" fill="none" stroke="#525252" stroke-width="1.6"/></svg>
<svg class="ico" style="left:12px;top:432px" width="21" height="20" viewBox="0 0 21 20"><path d="M9.4 2 L16 8 L9.4 14 L2.8 8Z" fill="none" stroke="#525252" stroke-width="1.6" stroke-linejoin="round"/><path d="M2.2 11.6 V19 M5.6 15 V19 M9.4 17 V19" stroke="#525252" stroke-width="1.6"/><path d="M13.4 14.4 L18.6 19.4 M18.6 14.4 L13.4 19.4" stroke="#525252" stroke-width="1.6"/></svg>

<!-- OBJECT LIST -->
<svg class="ico" style="left:56px;top:492px" width="11" height="8" viewBox="0 0 11 8"><path d="M1.2 1.6 L5.5 5.8 L9.8 1.6" fill="none" stroke="#e6e6e6" stroke-width="1.3"/></svg>
<span class="t" id="t13" style="left:78px;top:492.90px;font-size:9.8px;font-weight:normal;color:#d6d6d6;transform:scaleX(1.0136);transform-origin:0 0">Object list</span>
<div class="box" style="left:56px;top:506px;width:167px;height:29px;border-radius:0;border-color:#6a6a6a"></div>
<span class="t" id="t14" style="left:60px;top:515.90px;font-size:9.8px;font-weight:normal;color:#fff;transform:scaleX(0.9926);transform-origin:0 0">fuse04_grip_TM.stl</span>
<svg class="ico" style="left:57px;top:545px" width="14" height="14" viewBox="0 0 14 14"><path d="M1.4 9.4 L9.6 1.2 L12 3.6 L3.8 10.4 L1.2 10.6Z" fill="#fff"/><path d="M0.6 12.1 H13.1" stroke="#fff" stroke-width="1.5"/></svg>
<span class="t" id="t15" style="left:84.3px;top:546.90px;font-size:9.8px;font-weight:normal;color:#fff;transform:scaleX(0.9248);transform-origin:0 0">CFFFP_fuse04_grip_TM</span>
<span class="t" id="t16" style="left:56px;top:569.90px;font-size:9.8px;font-weight:normal;color:#fff;transform:scaleX(0.9887);transform-origin:0 0">206.5 x 206.5 x 163.0 mm</span>
<svg class="ico" style="left:57px;top:593px" width="21" height="21" viewBox="0 0 21 21"><path d="M10.1 1.6 L18.3 6.4 V15.4 L10.1 19.8 L2 15.4 V6.4Z M2 6.4 L10.1 10.9 L18.3 6.4 M10.1 10.9 V19.8" fill="none" stroke="#fff" stroke-width="1.9" stroke-linejoin="round"/></svg>
<svg class="ico" style="left:84px;top:593px" width="21" height="21" viewBox="0 0 21 21"><path d="M2.6 7.1 H14.3 V19.5 H3.4 Q1.9 19.5 1.9 18 V7.8Z" fill="#fff" stroke="#fff" stroke-width="1.9" stroke-linejoin="round"/><path d="M1.9 7.1 L6.2 2.6 Q6.7 2.3 7.4 2.3 H19.1 L14.3 7.1Z" fill="#1f1f1f" stroke="#fff" stroke-width="1.9" stroke-linejoin="round"/><path d="M14.3 7.1 L19.1 2.3 V13.4 Q19.1 14.2 18.6 14.8 L14.3 19.5Z" fill="#1f1f1f" stroke="#fff" stroke-width="1.9" stroke-linejoin="round"/></svg>
<svg class="ico" style="left:111.7px;top:593px" width="21" height="21" viewBox="0 0 21 21"><path d="M2.6 7.1 H14.3 V19.5 H3.4 Q1.9 19.5 1.9 18 V7.8Z" fill="#1f1f1f" stroke="#fff" stroke-width="1.9" stroke-linejoin="round"/><path d="M1.9 7.1 L6.2 2.6 Q6.7 2.3 7.4 2.3 H19.1 L14.3 7.1Z" fill="#fff" stroke="#fff" stroke-width="1.9" stroke-linejoin="round"/><path d="M14.3 7.1 L19.1 2.3 V13.4 Q19.1 14.2 18.6 14.8 L14.3 19.5Z" fill="#1f1f1f" stroke="#fff" stroke-width="1.9" stroke-linejoin="round"/></svg>
<svg class="ico" style="left:139px;top:593px" width="21" height="21" viewBox="0 0 21 21"><g transform="translate(21,0) scale(-1,1)"><path d="M2.6 7.1 H14.3 V19.5 H3.4 Q1.9 19.5 1.9 18 V7.8Z" fill="#1f1f1f" stroke="#fff" stroke-width="1.9" stroke-linejoin="round"/><path d="M1.9 7.1 L6.2 2.6 Q6.7 2.3 7.4 2.3 H19.1 L14.3 7.1Z" fill="#1f1f1f" stroke="#fff" stroke-width="1.9" stroke-linejoin="round"/><path d="M14.3 7.1 L19.1 2.3 V13.4 Q19.1 14.2 18.6 14.8 L14.3 19.5Z" fill="#fff" stroke="#fff" stroke-width="1.9" stroke-linejoin="round"/></g></svg>
<svg class="ico" style="left:166.3px;top:593px" width="21" height="21" viewBox="0 0 21 21"><path d="M2.6 7.1 H14.3 V19.5 H3.4 Q1.9 19.5 1.9 18 V7.8Z" fill="#1f1f1f" stroke="#fff" stroke-width="1.9" stroke-linejoin="round"/><path d="M1.9 7.1 L6.2 2.6 Q6.7 2.3 7.4 2.3 H19.1 L14.3 7.1Z" fill="#1f1f1f" stroke="#fff" stroke-width="1.9" stroke-linejoin="round"/><path d="M14.3 7.1 L19.1 2.3 V13.4 Q19.1 14.2 18.6 14.8 L14.3 19.5Z" fill="#fff" stroke="#fff" stroke-width="1.9" stroke-linejoin="round"/></svg>

<!-- ACTION PANEL -->
<div class="box" style="left:946.5px;top:500px;width:290px;height:109px;border-color:#5c5c5c"></div>
<svg class="ico" style="left:965px;top:517px" width="17" height="17" viewBox="0 0 17 17"><circle cx="8.8" cy="7.8" r="6.6" fill="none" stroke="#fff" stroke-width="1.6"/><path d="M8.5 3.8 V8 H12.3" fill="none" stroke="#fff" stroke-width="1.6"/></svg>
<span class="t" id="t17" style="left:988.1px;top:519.23px;font-size:11.3px;font-weight:bold;color:#fff;transform:scaleX(1.0062);transform-origin:0 0">11 hours 13 minutes</span>
<svg class="ico" style="left:1200px;top:516px" width="18" height="18" viewBox="0 0 18 18"><circle cx="8.7" cy="8.8" r="6.6" fill="none" stroke="#fff" stroke-width="1.5"/><path d="M8.7 7.8 V12.6" stroke="#fff" stroke-width="1.6"/><circle cx="8.7" cy="5.6" r="1" fill="#fff"/></svg>
<svg class="ico" style="left:965px;top:541px" width="17" height="17" viewBox="0 0 17 17"><circle cx="8.8" cy="8.6" r="6.3" fill="none" stroke="#fff" stroke-width="1.6"/><path d="M2.5 8.6 V14.6 L5.6 13.8" stroke="#fff" stroke-width="1.5" fill="none" stroke-linejoin="round"/><circle cx="8.4" cy="8.6" r="1.7" fill="none" stroke="#fff" stroke-width="1.2"/><path d="M9.6 7 L10.8 5.4" stroke="#fff" stroke-width="1.2"/></svg>
<span class="t" id="t18" style="left:988.1px;top:544.70px;font-size:9.8px;font-weight:normal;color:#d6d6d6;transform:scaleX(0.9638);transform-origin:0 0">160g &#183; 53.55m</span>
<div class="box" style="left:965px;top:566px;width:74px;height:28px;border-color:#d0d0d0;border-radius:1px;background:transparent"></div>
<span class="t" id="t19" style="left:982.6px;top:574.82px;font-size:11.2px;font-weight:normal;color:#fff;transform:scaleX(1.0051);transform-origin:0 0">Preview</span>
<div style="position:absolute;left:1050px;top:566px;width:167.3px;height:28px;background:#196ef0;border-radius:1px"></div>
<span class="t" id="t20" style="left:1102.7px;top:574.82px;font-size:11.2px;font-weight:normal;color:#fff;transform:scaleX(0.9918);transform-origin:0 0">Save to Disk</span>

</div>
</body>
</html>
